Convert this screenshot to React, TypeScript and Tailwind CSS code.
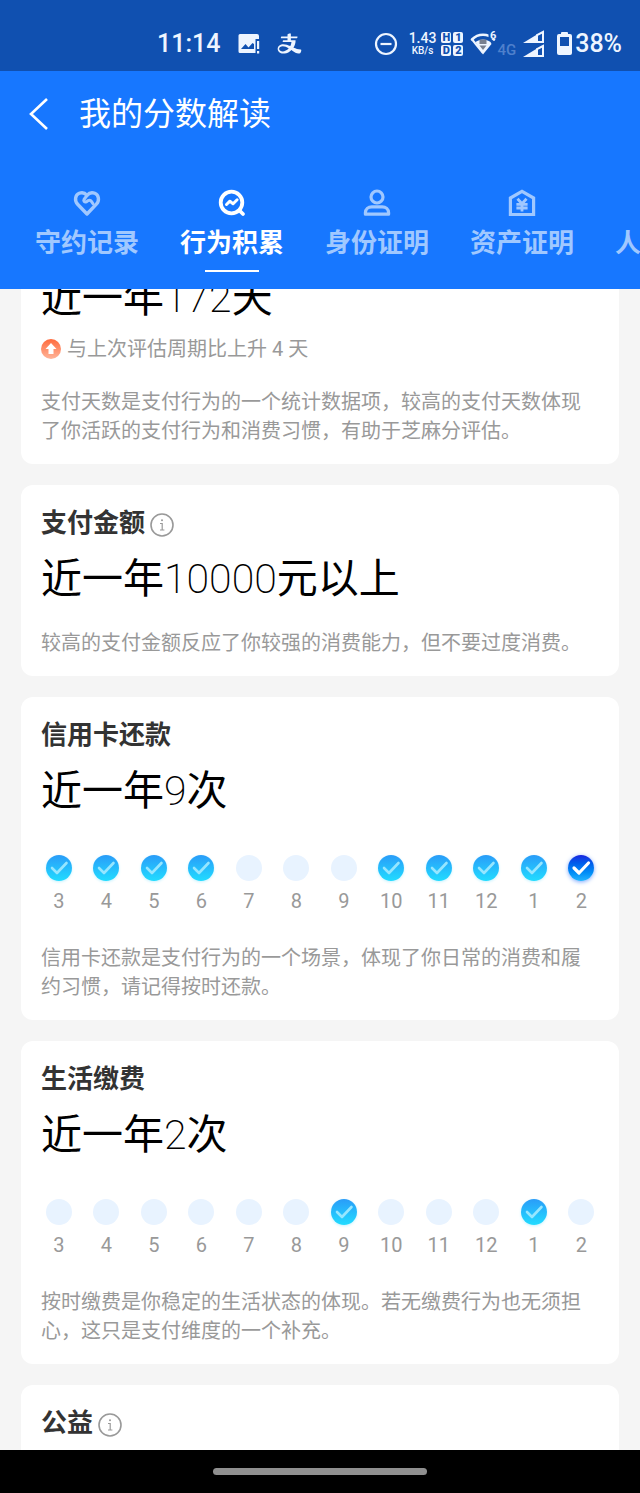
import { useState } from 'react';
import type { ReactNode } from 'react';
import { AiOutlineAlipay } from 'react-icons/ai';

const MONTHS = [3, 4, 5, 6, 7, 8, 9, 10, 11, 12, 1, 2];

const HeartIcon = () => (
    <svg width="28" height="28" viewBox="0 0 28 28" fill="none" stroke="currentColor" strokeWidth="3.4" strokeLinejoin="round" strokeLinecap="round">
        <path d="M14 25 4.6 15.2C1.2 11.6 2.2 6 6.2 4.3c2.8-1.2 5.8-.3 7.8 2 2-2.3 5-3.2 7.8-2 4 1.7 5 7.3 1.6 10.9Z" />
        <path d="M14 6.500 11 10.500c-.8 1.400.6 3 2.200 2.400l2-1.300c1.300-.7 2.700-.1 3.400 1l1.400 2.200" strokeWidth="3" />
    </svg>
);

const TrendIcon = () => (
    <svg width="28" height="28" viewBox="0 0 28 28" fill="none" stroke="currentColor" strokeWidth="3.8" strokeLinecap="round" strokeLinejoin="round">
        <circle cx="13.5" cy="13.5" r="10.8" />
        <path d="m21.5 21.5 3.5 3.5" />
        <path d="m8.5 15.5 3.4-3.3 3.2 2.6 4-4" strokeWidth="3" />
    </svg>
);

const PersonIcon = () => (
    <svg width="28" height="28" viewBox="0 0 28 28" fill="none" stroke="currentColor" strokeWidth="3.2" strokeLinejoin="round">
        <circle cx="14" cy="8" r="6" />
        <path d="M2.4 25.2v-1.400c0-3.600 2.900-6 6.400-6h10.400c3.500 0 6.400 2.400 6.400 6v1.400Z" />
    </svg>
);

const HouseIcon = () => (
    <svg width="28" height="28" viewBox="0 0 28 28" fill="none" stroke="currentColor" strokeWidth="3.2">
        <path d="M2.4 25.5V9L14 2.4 25.6 9v16.500Z" />
        <path d="m9.500 9.800 4.500 5 4.500-5M8.400 15.400h11.200M8.400 19h11.200M14 14.500v8" strokeWidth="2.8" />
    </svg>
);

const TABS = [
    { id: 'keep', label: '守约记录', icon: <HeartIcon /> },
    { id: 'behavior', label: '行为积累', icon: <TrendIcon /> },
    { id: 'identity', label: '身份证明', icon: <PersonIcon /> },
    { id: 'assets', label: '资产证明', icon: <HouseIcon /> },
    { id: 'people', label: '人', icon: null }
];

const StatusBar = () => (
    <div className="flex h-[71px] shrink-0 items-center bg-[#1050b0] pt-4 pr-[18px] pl-[157px] text-[#eef5ff]">
        <span className="text-[25px] leading-7 font-medium">11:14</span>
        <svg className="ml-[18px]" width="22" height="22" viewBox="0 0 22 22" fill="currentColor">
            <path fillRule="evenodd" d="M2 1h17a2 2 0 0 1 2 2v3h-3.5v14H2a1.500 1.500 0 0 1-1.500-1.500V2.500A1.500 1.500 0 0 1 2 1Zm1 15h13v-5l-1.500-1-4 4.500-3-3.500Z" />
            <path d="M19 8h2.200v8H19zM19 18h2.200v2.500H19z" />
        </svg>
        <AiOutlineAlipay className="ml-4" size={27} />
        <div className="ml-auto flex items-center">
            <svg width="24" height="24" viewBox="0 0 24 24" fill="none" stroke="currentColor" strokeWidth="2.2">
                <circle cx="12" cy="12" r="10" />
                <path d="M6.500 12h11" />
            </svg>
            <div className="ml-[11px] flex flex-col items-center font-medium">
                <span className="text-[14px] leading-[14px]">1.43</span>
                <span className="text-[10px] leading-[11px]">KB/s</span>
            </div>
            <div className="ml-[5px] grid grid-cols-2 gap-[2px] text-center text-[11px] leading-[11px] font-black text-[#1050b0]">
                <span className="w-[10px] rounded-[2px] bg-[#eef5ff]">H</span>
                <span className="w-[10px] rounded-[2px] bg-[#eef5ff]">1</span>
                <span className="w-[10px] rounded-[2px] bg-[#eef5ff]">D</span>
                <span className="w-[10px] rounded-[2px] bg-[#eef5ff]">2</span>
            </div>
            <svg className="ml-[7px]" width="27" height="26" viewBox="0 0 27 26">
                <path d="M2 8.500C8 2.200 18 2.200 24 8.500" fill="none" stroke="#eef5ff" strokeWidth="2.600" strokeLinecap="round" />
                <path d="M2.500 9 13 22" fill="none" stroke="#eef5ff" strokeWidth="2" />
                <path d="M5.500 11c4.500-3.500 10.500-3.500 15 0l1 2L13 23.500Z" fill="#eef5ff" />
                <path d="M9.500 8.500h7v4.500h-7z" fill="#777f8f" />
                <path d="M9.500 14.500h7L13 19Z" fill="#777f8f" />
                <path d="M18.500 0H27v8h-8.500z" fill="#1050b0" />
                <text x="20" y="8" fill="#eef5ff" fontSize="11" fontWeight="700">6</text>
            </svg>
            <span className="self-end text-[15px] leading-4 font-medium text-[#4f80cc]">4G</span>
            <svg className="ml-[7px]" width="22" height="28" viewBox="0 0 22 28" fill="none" stroke="#eef5ff" strokeWidth="2">
                <path d="M14 5.200 20 2v10h-6Z" />
                <path d="M0 13 14 4.500V13Z" fill="#eef5ff" stroke="none" />
                <path d="M14 19.200 20 16v10h-6Z" />
                <path d="M0 27 14 18.500V27Z" fill="#eef5ff" stroke="none" />
            </svg>
            <svg className="ml-3" width="15" height="25" viewBox="0 0 15 25" fill="#eef5ff">
                <rect x="4" y="1" width="7" height="4" rx="1" />
                <rect x="0" y="3" width="15" height="21" rx="2" />
                <rect x="3" y="6" width="9" height="9" fill="#1050b0" />
            </svg>
            <span className="ml-[3px] text-[25px] leading-7 font-medium">38%</span>
        </div>
    </div>
);

const Header = () => {
    const [active, setActive] = useState('behavior');

    return (
        <header className="z-10 shrink-0 overflow-hidden bg-[#1777ff] text-white">
            <div className="flex h-[86px] items-center">
                <button aria-label="返回" className="ml-7">
                    <svg width="24" height="34" viewBox="0 0 24 34" fill="none" stroke="currentColor" strokeWidth="2.6">
                        <path d="M19 2 3 17l16 15" />
                    </svg>
                </button>
                <h1 className="ml-[27px] text-[32px] leading-10">我的分数解读</h1>
            </div>
            <nav className="flex gap-[41px] pt-8 pl-[35px]">
                {TABS.map((tab) => (
                    <button
                        key={tab.id}
                        onClick={() => setActive(tab.id)}
                        className={`flex shrink-0 flex-col items-center ${active === tab.id ? 'text-white' : 'text-[#a0c8ff]'}`}
                    >
                        <span className="h-7">{tab.icon}</span>
                        <span className="mt-[10px] text-[26px] leading-8 font-bold">{tab.label}</span>
                        <span className={`mt-[11px] mb-[17px] h-[2px] w-[54px] ${active === tab.id ? 'bg-white' : 'hidden'}`} />
                    </button>
                ))}
            </nav>
        </header>
    );
};

const InfoButton = () => (
    <button aria-label="说明" className="mt-1 ml-[5px] text-[#999]">
        <svg width="24" height="24" viewBox="0 0 24 24" fill="none" stroke="currentColor" strokeWidth="1.600">
            <circle cx="12" cy="12" r="11" />
            <path d="M10 10.500h2.200V17M10 17h4.400" strokeWidth="1.200" />
            <circle cx="12" cy="7.300" r="1" fill="currentColor" stroke="none" />
        </svg>
    </button>
);

const CardTitle = ({ children, info }: { children: ReactNode; info?: boolean }) => (
    <div className="mb-4 flex items-center">
        <h2 className="text-[26px] leading-8 font-bold text-[#333]">{children}</h2>
        {info && <InfoButton />}
    </div>
);

const Amount = ({ value, unit }: { value: string; unit: string }) => (
    <p className="text-[41px] leading-12 text-black">
        近一年<span className="font-extralight">{value}</span>{unit}
    </p>
);

const Note = ({ children }: { children: ReactNode }) => (
    <p className="text-[20px] leading-[29px] text-[#999]">{children}</p>
);

const MonthDot = ({ done, current }: { done: boolean; current: boolean }) => {
    if (!done) return <span className="size-[26px] rounded-full bg-[#e8f3ff]" />;

    return (
        <span
            className={`flex size-[26px] items-center justify-center rounded-full bg-linear-to-b ${current
                ? 'from-[#1a22e0] to-[#22b4ff] text-white shadow-[0_1px_4px_#7da8ff]'
                : 'from-[#2a9cf8] to-[#22dcff] text-[#96e6ff] shadow-[0_1px_3px_#c8f2ff]'}`}
        >
            <svg width="26" height="26" viewBox="0 0 26 26" fill="none" stroke="currentColor" strokeWidth={current ? 3.2 : 2.6} strokeLinecap="round" strokeLinejoin="round">
                <path d="m6 13 5 5 9.500-10" />
            </svg>
        </span>
    );
};

const MonthRow = ({ done, current }: { done: number[]; current?: number }) => (
    <ul className="-mx-[6px] mt-10 mb-[29px] grid grid-cols-12">
        {MONTHS.map((month) => (
            <li key={month} className="flex flex-col items-center">
                <MonthDot done={done.includes(month)} current={month === current} />
                <span className="mt-[6px] text-[20px] leading-7 text-[#999]">{month}</span>
            </li>
        ))}
    </ul>
);

const App = () => (
    <div className="flex h-screen flex-col overflow-hidden bg-[#f5f5f5] font-[Roboto,'Noto_Sans_CJK_SC',sans-serif]">
        <StatusBar />
        <Header />
        <main className="min-h-0 flex-1 overflow-hidden px-[21px]">
            {/* the list is scrolled a little under the header */}
            <div className="-mt-[15px] flex flex-col gap-[21px]">
                <section className="rounded-b-xl bg-white px-5 pb-[18px]">
                    <Amount value="172" unit="天" />
                    <div className="mt-[13px] mb-[25px] flex items-center text-[20px] leading-7 text-[#999]">
                        <svg width="20" height="20" viewBox="0 0 20 20">
                            <defs>
                                <linearGradient id="rise" x1="0" y1="0" x2="0" y2="1">
                                    <stop offset="0" stopColor="#ff6a3c" />
                                    <stop offset="1" stopColor="#ffb59a" />
                                </linearGradient>
                            </defs>
                            <circle cx="10" cy="10" r="10" fill="url(#rise)" />
                            <path d="m10 4 5.500 6H12.500v5h-5v-5h-3Z" fill="#fff" />
                        </svg>
                        <span className="ml-[6px]">与上次评估周期比上升 4 天</span>
                    </div>
                    <Note>支付天数是支付行为的一个统计数据项，较高的支付天数体现了你活跃的支付行为和消费习惯，有助于芝麻分评估。</Note>
                </section>

                <section className="rounded-xl bg-white px-5 pt-[22px] pb-[18px]">
                    <CardTitle info>支付金额</CardTitle>
                    <Amount value="10000" unit="元以上" />
                    <div className="mt-[26px]">
                        <Note>较高的支付金额反应了你较强的消费能力，但不要过度消费。</Note>
                    </div>
                </section>

                <section className="rounded-xl bg-white px-5 pt-[22px] pb-[18px]">
                    <CardTitle>信用卡还款</CardTitle>
                    <Amount value="9" unit="次" />
                    <MonthRow done={[3, 4, 5, 6, 10, 11, 12, 1, 2]} current={2} />
                    <Note>信用卡还款是支付行为的一个场景，体现了你日常的消费和履约习惯，请记得按时还款。</Note>
                </section>

                <section className="rounded-xl bg-white px-5 pt-[22px] pb-[18px]">
                    <CardTitle>生活缴费</CardTitle>
                    <Amount value="2" unit="次" />
                    <MonthRow done={[9, 1]} />
                    <Note>按时缴费是你稳定的生活状态的体现。若无缴费行为也无须担心，这只是支付维度的一个补充。</Note>
                </section>

                <section className="rounded-t-xl bg-white px-5 pt-[22px] pb-[18px]">
                    <CardTitle info>公益</CardTitle>
                </section>
            </div>
        </main>
        <footer className="flex h-[43px] shrink-0 items-center justify-center bg-black">
            <span className="h-[7px] w-1/3 rounded-full bg-[#8f8f8f]" />
        </footer>
    </div>
);

export default App;
